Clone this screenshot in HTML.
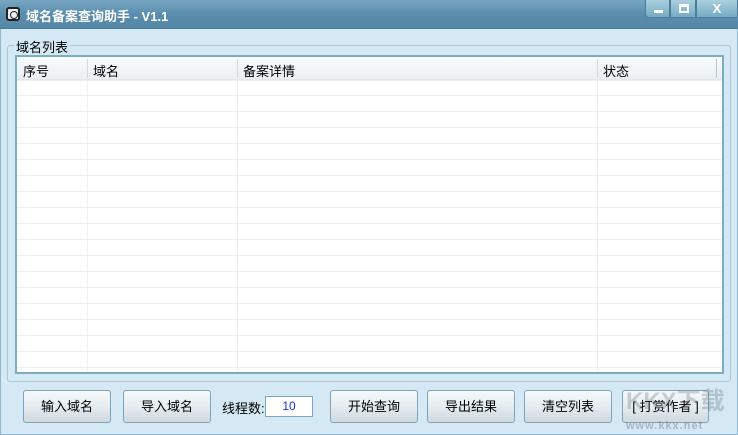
<!DOCTYPE html><html><head><meta charset="utf-8"><style>
*{margin:0;padding:0;box-sizing:border-box}
html,body{width:738px;height:435px;overflow:hidden}
body{background:#d4e9f3;font-family:"Liberation Sans","Noto Sans CJK SC",sans-serif;font-size:12px;color:#000;position:relative}
.tb{position:absolute;left:0;top:0;width:738px;height:29px;background:linear-gradient(#78a6c2,#5a8eae 50%,#5687a7);border-bottom:1px solid #4d7c99}
.tt{position:absolute;left:26px;top:6px;color:#fff;font-weight:bold;font-size:13px;white-space:nowrap}
.ic{position:absolute;left:6px;top:7px;width:14px;height:14px;border:2px solid #222;border-radius:3px;background:#e8eef2}
.ic:after{content:"";position:absolute;left:2px;top:2px;width:6px;height:6px;border:1.5px solid #222;border-radius:50%}
.wb{position:absolute;top:0;height:18px;background:linear-gradient(#a9cfdf,#75abc3);border:1px solid #4d7c99;border-top:none}
.win{position:absolute;left:0;top:29px;width:738px;height:406px;border:1px solid #8fb9cc;border-top:none}
.gb{position:absolute;left:7px;top:45px;width:724px;height:337px;border:1px solid #a9c6d3;border-radius:3px}
.gl{position:absolute;left:14px;top:37px;background:#d4e9f3;padding:0 2px;font-size:13px}
.lv{position:absolute;left:15px;top:55px;width:709px;height:319px;border:2px solid #79aec6;background:#fff;overflow:hidden}
.hd{position:absolute;left:0;top:0;width:705px;height:23px;background:linear-gradient(#fafcfd,#eaeff2);border-bottom:1px solid #e2e7ea}
.hd span{position:absolute;top:4px;font-size:13px}
.hs{position:absolute;top:2px;width:1px;height:19px;background:#d5dadd}
.rl{position:absolute;left:0;width:705px;height:1px;background:#efefef}
.cl{position:absolute;top:23px;width:1px;height:300px;background:#efefef}
.bt{position:absolute;top:390px;height:33px;border:1px solid #7ea5bb;border-radius:3px;background:linear-gradient(#f7f9fa,#e6ecef 50%,#cfd9df);text-align:center;line-height:31px;font-size:13px;white-space:nowrap}
</style></head><body>
<div class="tb"><div class="ic"></div><div class="tt">域名备案查询助手 - V1.1</div>
<div class="wb" style="left:645px;width:25px;border-radius:0 0 0 4px"><div style="position:absolute;left:8px;top:10px;width:9px;height:3px;background:#fff"></div></div>
<div class="wb" style="left:670px;width:26px;"><div style="position:absolute;left:8px;top:4px;width:10px;height:9px;border:2px solid #fff;border-top-width:3px"></div></div>
<div class="wb" style="left:696px;width:42px;color:#fff;font-weight:bold;font-size:13px;text-align:center;line-height:17px">X</div></div>
<div class="win"></div>
<div class="gb"></div><div class="gl">域名列表</div>
<div class="lv">
<div class="hd"><span style="left:6px">序号</span><span style="left:76px">域名</span><span style="left:226px">备案详情</span><span style="left:586px">状态</span>
<div class="hs" style="left:70px"></div><div class="hs" style="left:220px"></div><div class="hs" style="left:580px"></div><div class="hs" style="left:699px;background:#b9c2c8"></div></div>
<div class="cl" style="left:70px"></div><div class="cl" style="left:220px"></div><div class="cl" style="left:580px"></div>
<div class="rl" style="top:23px"></div><div class="rl" style="top:38px"></div><div class="rl" style="top:54px"></div><div class="rl" style="top:70px"></div><div class="rl" style="top:86px"></div><div class="rl" style="top:102px"></div><div class="rl" style="top:118px"></div><div class="rl" style="top:134px"></div><div class="rl" style="top:150px"></div><div class="rl" style="top:166px"></div><div class="rl" style="top:182px"></div><div class="rl" style="top:198px"></div><div class="rl" style="top:214px"></div><div class="rl" style="top:230px"></div><div class="rl" style="top:246px"></div><div class="rl" style="top:262px"></div><div class="rl" style="top:278px"></div><div class="rl" style="top:294px"></div><div class="rl" style="top:310px"></div>
</div>
<div class="bt" style="left:23px;width:88px">输入域名</div>
<div class="bt" style="left:123px;width:88px">导入域名</div>
<div style="position:absolute;left:222px;top:398px;font-size:13px;white-space:nowrap">线程数:</div>
<div style="position:absolute;left:265px;top:396px;width:48px;height:21px;border:1px solid #7aa7bf;background:#fff;color:#1a2fd8;text-align:center;line-height:19px">10</div>
<div class="bt" style="left:330px;width:88px">开始查询</div>
<div class="bt" style="left:427px;width:88px">导出结果</div>
<div class="bt" style="left:524px;width:88px">清空列表</div>
<div class="bt" style="left:622px;width:87px">[ 打赏作者 ]</div>
<div style="position:absolute;left:626px;top:381px;font-size:24px;font-weight:bold;color:rgba(90,110,120,.3);white-space:nowrap">KKX下载</div>
<div style="position:absolute;left:626px;top:420px;font-size:11px;font-weight:bold;color:rgba(90,110,120,.4);letter-spacing:1px;white-space:nowrap">www.kkx.net</div>
</body></html>
